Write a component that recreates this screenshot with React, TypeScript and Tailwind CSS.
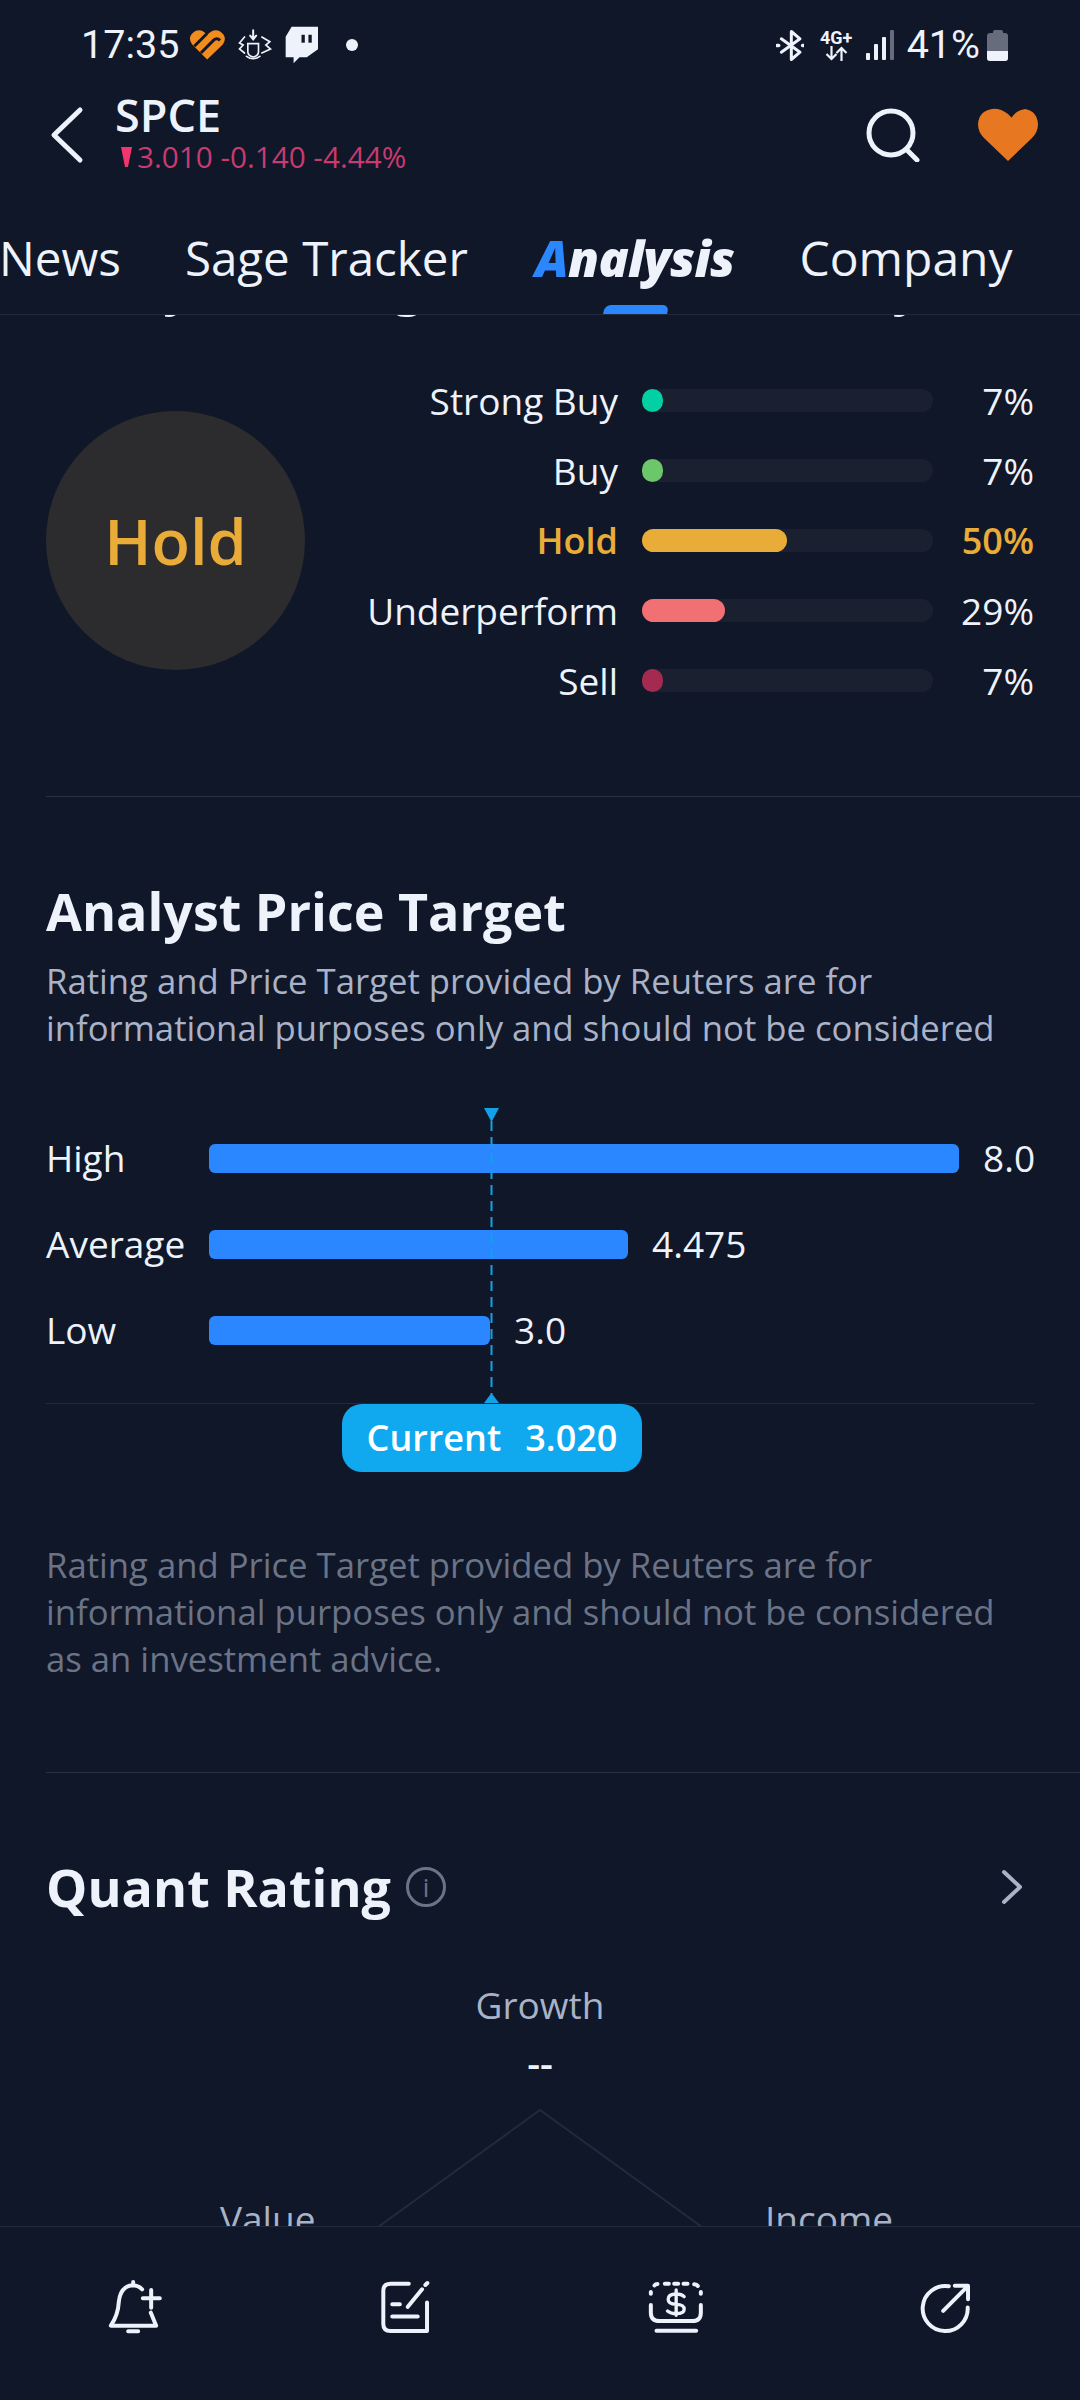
const rows = [
  { label: "Strong Buy", pct: "7%", fill: 21, color: "bg-[#00d0a4]", hold: false },
  { label: "Buy", pct: "7%", fill: 21, color: "bg-[#6cc76b]", hold: false },
  { label: "Hold", pct: "50%", fill: 145, color: "bg-[#e9ac38]", hold: true },
  { label: "Underperform", pct: "29%", fill: 83, color: "bg-[#f07073]", hold: false },
  { label: "Sell", pct: "7%", fill: 21, color: "bg-[#a52a50]", hold: false },
];

const targets = [
  { label: "High", value: "8.0", width: 750 },
  { label: "Average", value: "4.475", width: 419 },
  { label: "Low", value: "3.0", width: 281 },
];

function StatusLeft() {
  return (
    <div className="flex items-center">
      <span className="ml-[81px] text-[39.5px] leading-[44px] font-['Roboto',sans-serif]">17:35</span>
      <svg className="ml-[10px]" width="37" height="32" viewBox="392 60 112 96">
        <path d="M447 152L401 106Q385 82 410 66Q431 57 447 78Q465 57 485 66Q510 82 495 106Z" fill="#f28c1e" />
        <path d="M408 112L446 74M428 132L466 94Q476 84 486 94" stroke="#0f1729" strokeWidth="9" fill="none" />
      </svg>
      <svg className="ml-[10px]" width="37" height="36" viewBox="535 60 110 108" fill="none" stroke="#eef2fb" strokeWidth="5" strokeLinecap="round">
        <path d="M570 110H602V134Q602 146 586 150Q570 146 570 134Z" />
        <path d="M586 70V96M577 86L586 97L595 86" strokeWidth="6" />
        <path d="M560 90L545 108L556 114L545 126L560 138M612 90L636 104L624 114L638 126L612 138" />
        <path d="M566 148Q586 162 606 148" />
      </svg>
      <svg className="ml-[12px]" width="33" height="38" viewBox="680 54 100 110">
        <path d="M682 84L700 54H780V122L746 146H724L706 164V146H682Z" fill="#eef2fb" />
        <rect x="730" y="78" width="10" height="24" fill="#0f1729" />
        <rect x="751" y="78" width="10" height="24" fill="#0f1729" />
      </svg>
      <span className="ml-[28px] size-[12px] rounded-full bg-[#eef2fb]" />
    </div>
  );
}

function StatusRight() {
  return (
    <div className="flex items-center mr-[72px]">
      <svg width="28" height="33" viewBox="48 62 84 96" fill="none" stroke="#eef2fb" strokeWidth="9" strokeLinecap="round" strokeLinejoin="round">
        <path d="M64 90L120 130L94 152V68L120 90L64 130" />
        <path d="M52 110H56M128 110H132" strokeWidth="11" />
      </svg>
      <div className="ml-[15px] flex w-[35px] flex-col items-center">
        <span className="text-[18px] leading-[17px] font-bold font-['Roboto',sans-serif]">4G+</span>
        <svg width="25" height="15" viewBox="0 0 24 15" fill="none" stroke="#eef2fb" strokeWidth="2.2">
          <path d="M7 0V13M2 8L7 13L12 8M17 15V2M12 7L17 2L22 7" />
        </svg>
      </div>
      <div className="ml-[12px] flex h-[30px] items-end gap-[4px]">
        <span className="h-[7px] w-[4px] rounded-[1px] bg-[#eef2fb]" />
        <span className="h-[16px] w-[4px] rounded-[1px] bg-[#eef2fb]" />
        <span className="h-[23px] w-[4px] rounded-[1px] bg-[#eef2fb]" />
        <span className="h-[30px] w-[4px] rounded-[1px] bg-[#666c7c]" />
      </div>
      <span className="ml-[13px] text-[39.5px] leading-[44px] font-['Roboto',sans-serif]">41%</span>
      <div className="ml-[7px] flex flex-col items-center">
        <span className="h-[3px] w-[10px] rounded-t-[2px] bg-[#666c7c]" />
        <div className="flex h-[28px] w-[21px] flex-col justify-end overflow-hidden rounded-[3px] bg-[#666c7c]">
          <span className="h-[10px] bg-[#eef2fb]" />
        </div>
      </div>
    </div>
  );
}

function BackIcon() {
  return (
    <svg width="36" height="58" viewBox="0 0 36 58" fill="none" stroke="#eef2fb" strokeWidth="5" strokeLinecap="round" strokeLinejoin="round">
      <path d="M31 4L5 29L31 54" />
    </svg>
  );
}

function SearchIcon() {
  return (
    <svg width="54" height="54" viewBox="0 0 54 54" fill="none" stroke="#eef2fb" strokeWidth="5" strokeLinecap="round">
      <circle cx="25" cy="25" r="22" />
      <path d="M41 42L51 52" />
    </svg>
  );
}

function HeartIcon() {
  return (
    <svg width="60" height="54" viewBox="0 0 60 54">
      <path d="M30 53L6 30Q0 24 0 16Q1 3 14 1Q22 0 30 6L36 12L31 15Q36 2 47 1Q59 3 60 16Q60 24 54 30Z" fill="#e87722" />
    </svg>
  );
}

function BellIcon() {
  return (
    <svg width="57" height="55" viewBox="85 60 170 165" fill="none" stroke="#eef2fb" strokeWidth="12" strokeLinecap="round" strokeLinejoin="round">
      <path d="M190 88Q178 76 160 76Q125 80 120 125Q118 165 96 197H232L216 158" />
      <path d="M192 115H243M217 90V143M148 214H178M163 66V68" />
    </svg>
  );
}

function NoteIcon() {
  return (
    <svg width="53" height="57" viewBox="895 60 160 170" fill="none" stroke="#eef2fb" strokeWidth="12" strokeLinecap="round" strokeLinejoin="round">
      <path d="M985 73H930Q908 73 908 95V195Q908 216 930 216H1040V130" />
      <path d="M935 135H958M935 172H1012M982 143L1025 90M1035 77L1041 71" />
    </svg>
  );
}

function DollarIcon() {
  return (
    <svg width="57" height="55" viewBox="77 62 170 165" fill="none" stroke="#eef2fb" strokeWidth="12" strokeLinecap="round" strokeLinejoin="round">
      <path d="M88 98V103M99 78Q102 74 108 74M130 73H142M158 73H170M186 73H198M218 75Q226 76 229 80M238 98V103" />
      <path d="M88 137V160Q88 185 115 185H212Q238 185 238 160V137M105 214H224" />
      <path d="M188 112Q180 104 164 104Q140 104 140 120Q140 135 164 135Q188 135 188 150Q188 163 164 163Q147 163 138 155M164 92V168" strokeWidth="10" />
    </svg>
  );
}

function ShareIcon() {
  return (
    <svg width="53" height="53" viewBox="895 60 160 160" fill="none" stroke="#eef2fb" strokeWidth="12" strokeLinecap="round" strokeLinejoin="round">
      <path d="M985 76A68 68 0 1 0 1042 140" />
      <path d="M968 150L1040 78M1003 74H1043V115" />
    </svg>
  );
}

export default function App() {
  return (
    <div className="relative flex h-[2400px] w-[1080px] flex-col overflow-hidden bg-[#0f1729] text-[#eef2fb] font-['Open_Sans',sans-serif]">
      <header className="relative z-10 h-[315px] shrink-0 border-b border-[#232a3b] bg-[#0f1729]">
        <div className="flex h-[90px] items-center justify-between">
          <StatusLeft />
          <StatusRight />
        </div>
        <div className="flex h-[90px] items-center justify-between pl-[49px] pr-[42px]">
          <div className="flex items-center">
            <BackIcon />
            <div className="ml-[30px] -mt-[4px] flex flex-col">
              <span className="text-[45px] leading-[46px] font-semibold">SPCE</span>
              <div className="mt-[2px] flex items-center">
                <svg className="ml-[6px]" width="11" height="21" viewBox="0 0 11 21">
                  <path d="M0 0H11L7 20H4Z" fill="#f0356f" />
                </svg>
                <span className="ml-[5px] text-[29.7px] leading-[34px] text-[#c93a6e]">3.010 -0.140 -4.44%</span>
              </div>
            </div>
          </div>
          <div className="flex items-center gap-[58px]">
            <SearchIcon />
            <HeartIcon />
          </div>
        </div>
        <nav className="relative -ml-[1px] flex h-[134px] items-start gap-[64px] whitespace-nowrap pt-[46px] text-[47.5px] leading-[64px]">
          <span>News</span>
          <span>Sage Tracker</span>
          <span className="ml-[3px] text-[50px] font-extrabold italic tracking-[-0.7px]">
            <span className="text-[#2b87ff]">A</span>nalysis
          </span>
          <span className="ml-[1px] text-[48px]">Company</span>
          <span className="absolute left-[605px] bottom-0 h-[9px] w-[64px] -skew-x-12 rounded-t-[6px] bg-[#2b87ff]" />
        </nav>
      </header>

      <main className="min-h-0 flex-1 overflow-hidden">
        <div className="-mt-[63px] flex h-[64px] whitespace-nowrap pl-[46px] text-[52px] leading-[64px] font-bold">
          <span>Analyst Rating</span>
          <span className="ml-[250px]">Summary</span>
        </div>

        <section className="mt-[73px] flex items-center pl-[46px] pr-[46px]">
          <div className="flex size-[259px] shrink-0 items-center justify-center rounded-full bg-[#2c2c2e] text-[63px] leading-[80px] font-semibold text-[#e9ac38]">
            Hold
          </div>
          <div className="flex flex-1 flex-col gap-[47px]">
            {rows.map((r) => (
              <div key={r.label} className={`flex h-[23px] items-center leading-[47px] ${r.hold ? "text-[36px] font-semibold text-[#e9ac38]" : "text-[37px]"}`}>
                <span className="flex-1 text-right whitespace-nowrap">{r.label}</span>
                <div className="ml-[24px] h-[23px] w-[291px] shrink-0 rounded-full bg-[#1a2030]">
                  <div className={`h-[23px] rounded-full ${r.color}`} style={{ width: r.fill }} />
                </div>
                <span className="w-[101px] shrink-0 text-right">{r.pct}</span>
              </div>
            ))}
          </div>
        </section>

        <div className="ml-[46px] mt-[104px] border-t border-[#2a3142]" />

        <h2 className="mt-[82px] pl-[46px] text-[52px] leading-[64px] font-bold">Analyst Price Target</h2>
        <p className="mt-[14px] px-[46px] text-[34.7px] leading-[47px] whitespace-pre-line text-[#a9b2c7]">
          {"Rating and Price Target provided by Reuters are for\ninformational purposes only and should not be considered"}
        </p>

        <section className="relative mt-[93px]">
          <svg className="absolute left-[483px] -top-[36px]" width="17" height="14" viewBox="0 0 17 14">
            <path d="M1 0H16L8.5 14Z" fill="#12a0e8" />
          </svg>
          <svg className="absolute left-[490px] -top-[23px] z-[1]" width="3" height="273" viewBox="0 0 3 273">
            <path d="M1.5 0V273" stroke="#14a0ea" strokeWidth="2" strokeDasharray="10 6" />
          </svg>
          <svg className="absolute left-[483px] top-[249px]" width="17" height="10" viewBox="0 0 17 10">
            <path d="M1 10L8.5 0L16 10Z" fill="#12a0e8" />
          </svg>
          <div className="flex flex-col gap-[57px] pl-[46px]">
            {targets.map((t) => (
              <div key={t.label} className="flex h-[29px] items-center text-[37px] leading-[47px]">
                <span className="w-[163px] shrink-0 pb-[2px]">{t.label}</span>
                <div className="h-[29px] rounded-[6px] bg-[#2b87ff]" style={{ width: t.width }} />
                <span className="ml-[24px] pb-[2px]">{t.value}</span>
              </div>
            ))}
          </div>
          <div className="mx-[46px] mt-[58px] border-t border-[#232a3b]" />
          <div className="ml-[342px] flex h-[68px] w-[300px] items-center justify-center gap-[24px] rounded-[20px] bg-[#10a8ee] text-[36px] leading-[46px] font-semibold whitespace-nowrap text-white">
            <span>Current</span>
            <span>3.020</span>
          </div>
        </section>

        <p className="mt-[69px] px-[46px] text-[34.7px] leading-[47px] whitespace-pre-line text-[#6b7386]">
          {"Rating and Price Target provided by Reuters are for\ninformational purposes only and should not be considered\nas an investment advice."}
        </p>

        <div className="ml-[46px] mt-[90px] border-t border-[#2a3142]" />

        <div className="mt-[82px] flex h-[64px] items-center pl-[46px] pr-[56px]">
          <h2 className="text-[52px] leading-[64px] font-bold">Quant Rating</h2>
          <span className="ml-[15px] flex size-[40px] items-center justify-center rounded-full border-[3px] border-[#6b7386] text-[26px] leading-none text-[#6b7386]">
            i
          </span>
          <svg className="ml-auto" width="24" height="36" viewBox="0 0 24 36" fill="none" stroke="#a9b2c7" strokeWidth="4" strokeLinecap="round" strokeLinejoin="round">
            <path d="M4 3L20 18L4 33" />
          </svg>
        </div>

        <section className="relative mt-[62px] h-[300px] text-center text-[37px] leading-[47px]">
          <p className="text-[#a9b2c7]">Growth</p>
          <p className="mt-[11px] text-[40px] font-semibold">--</p>
          <svg className="absolute left-[367px] top-[128px]" width="346" height="130" viewBox="0 0 346 130" fill="none" stroke="#232a3b" strokeWidth="2">
            <path d="M0 126L173 1L346 126" />
          </svg>
          <span className="absolute left-[220px] top-[214px] text-[#a9b2c7]">Value</span>
          <span className="absolute left-[765px] top-[214px] text-[#a9b2c7]">Income</span>
        </section>
      </main>

      <footer className="relative z-10 grid h-[174px] shrink-0 grid-cols-4 place-items-center border-t border-[#232a3b] bg-[#0f1729] pb-[12px]">
        <BellIcon />
        <NoteIcon />
        <DollarIcon />
        <ShareIcon />
      </footer>
    </div>
  );
}
